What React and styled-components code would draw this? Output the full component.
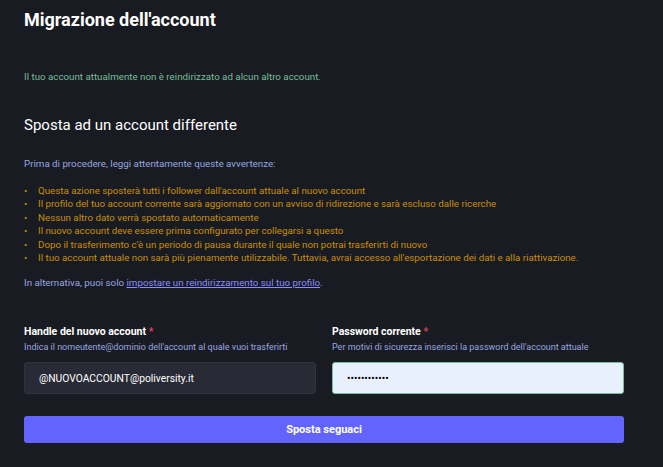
import styled, { createGlobalStyle } from "styled-components";

const GlobalStyle = createGlobalStyle`
  html, body {
    margin: 0;
    padding: 0;
    background: #191b22;
  }
  body {
    font-family: Roboto, "Noto Sans", "Liberation Sans", sans-serif;
    color: #ffffff;
  }
`;

const Page = styled.div`
  padding: 8px 39px 24px 24px;
  display: flex;
  flex-direction: column;
`;

const Title = styled.h1`
  margin: 0;
  font-size: 18px;
  line-height: 24px;
  font-weight: 700;
  color: #ffffff;
`;

const Hint = styled.p`
  margin: ${(p) => p.$mt || 0}px 0 0;
  font-size: 9.75px;
  line-height: 13px;
  color: ${(p) => p.$color || "#9aa6e0"};
`;

const SubTitle = styled.h2`
  margin: 31px 0 0;
  font-size: 15px;
  line-height: 22px;
  font-weight: 400;
  color: #ffffff;
`;

const Warnings = styled.ul`
  margin: 14px 0 0;
  padding: 0;
  list-style: none;
`;

const Warning = styled.li`
  position: relative;
  padding-left: 14px;
  font-size: 9.75px;
  line-height: 13.4px;
  color: #ca8f04;

  &::before {
    content: "•";
    position: absolute;
    left: 0;
    top: 0;
  }
`;

const Link = styled.a`
  color: #8c8dff;
  text-decoration: underline;
`;

const Fields = styled.div`
  margin-top: 36px;
  display: grid;
  grid-template-columns: 1fr 1fr;
  gap: 16px;
`;

const Field = styled.div`
  display: flex;
  flex-direction: column;
`;

const Label = styled.label`
  font-size: 10.5px;
  line-height: 14px;
  font-weight: 700;
  color: #ffffff;

  span {
    color: #df405a;
  }
`;

const FieldHint = styled.div`
  margin-top: 2px;
  font-size: 9px;
  line-height: 12px;
  color: #9aa6e0;
`;

const Input = styled.input`
  margin-top: 9px;
  box-sizing: border-box;
  height: 32px;
  width: 100%;
  padding: 0 14px;
  border-radius: 3px;
  font-family: inherit;
  font-size: 10.3px;
  outline: none;
  border: 1px solid ${(p) => (p.$filled ? "#79bd9a" : "#30323e")};
  background: ${(p) => (p.$filled ? "#e8f0fe" : "#282a35")};
  color: ${(p) => (p.$filled ? "#000000" : "#ffffff")};
`;

const Button = styled.button`
  margin-top: 22px;
  height: 27px;
  width: 100%;
  border: none;
  border-radius: 3px;
  background: #6364ff;
  color: #ffffff;
  font-family: inherit;
  font-size: 11px;
  font-weight: 700;
  cursor: pointer;
`;

export default function App() {
  return (
    <>
      <GlobalStyle />
      <Page>
        <Title>Migrazione dell'account</Title>
        <Hint $mt={38} $color="#79bd9a">
          Il tuo account attualmente non è reindirizzato ad alcun altro account.
        </Hint>

        <SubTitle>Sposta ad un account differente</SubTitle>
        <Hint $mt={21}>Prima di procedere, leggi attentamente queste avvertenze:</Hint>

        <Warnings>
          <Warning>Questa azione sposterà tutti i follower dall'account attuale al nuovo account</Warning>
          <Warning>Il profilo del tuo account corrente sarà aggiornato con un avviso di ridirezione e sarà escluso dalle ricerche</Warning>
          <Warning>Nessun altro dato verrà spostato automaticamente</Warning>
          <Warning>Il nuovo account deve essere prima configurato per collegarsi a questo</Warning>
          <Warning>Dopo il trasferimento c'è un periodo di pausa durante il quale non potrai trasferirti di nuovo</Warning>
          <Warning>Il tuo account attuale non sarà più pienamente utilizzabile. Tuttavia, avrai accesso all'esportazione dei dati e alla riattivazione.</Warning>
        </Warnings>

        <Hint $mt={12}>
          In alternativa, puoi solo <Link href="#">impostare un reindirizzamento sul tuo profilo</Link>.
        </Hint>

        <Fields>
          <Field>
            <Label>Handle del nuovo account <span>*</span></Label>
            <FieldHint>Indica il nomeutente@dominio dell'account al quale vuoi trasferirti</FieldHint>
            <Input defaultValue="@NUOVOACCOUNT@poliversity.it" />
          </Field>
          <Field>
            <Label>Password corrente <span>*</span></Label>
            <FieldHint>Per motivi di sicurezza inserisci la password dell'account attuale</FieldHint>
            <Input $filled type="password" defaultValue="passwordsegr" />
          </Field>
        </Fields>

        <Button>Sposta seguaci</Button>
      </Page>
    </>
  );
}
